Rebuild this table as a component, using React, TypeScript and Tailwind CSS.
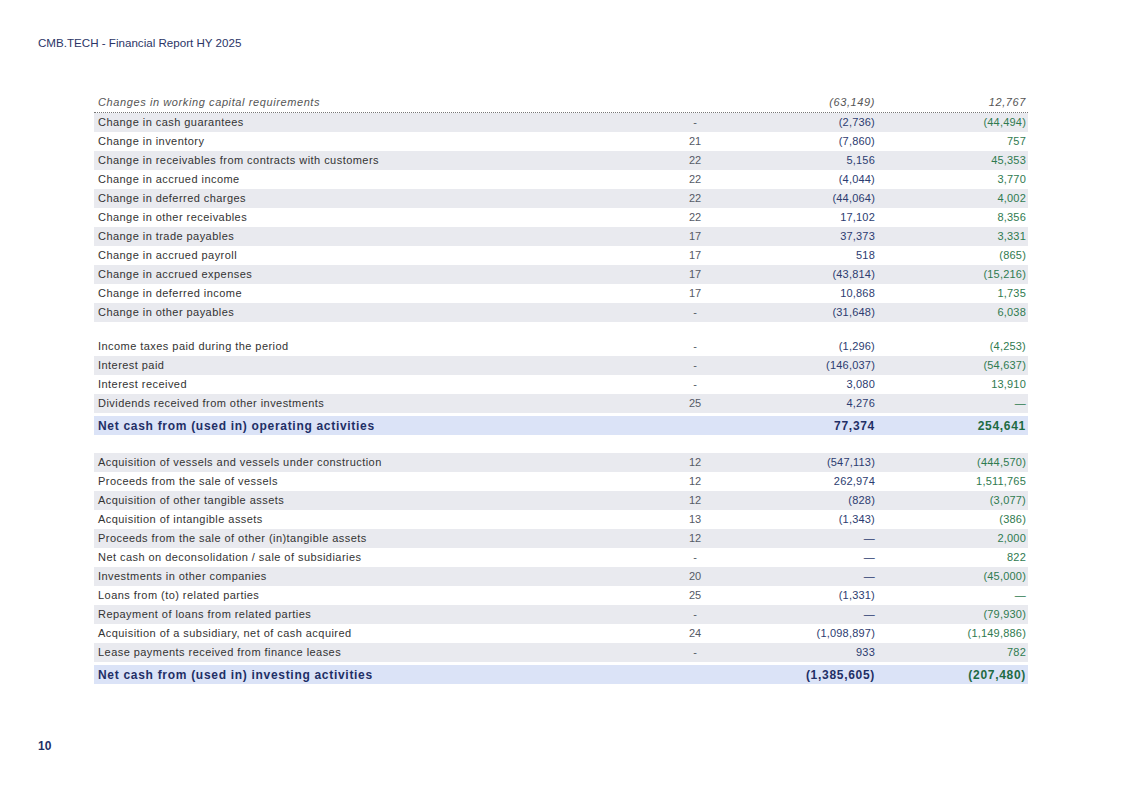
type Row = {
    label: string;
    note?: string;
    cur: string;
    prev: string;
};

const operating: Row[] = [
    { label: 'Change in cash guarantees', note: '-', cur: '(2,736)', prev: '(44,494)' },
    { label: 'Change in inventory', note: '21', cur: '(7,860)', prev: '757' },
    { label: 'Change in receivables from contracts with customers', note: '22', cur: '5,156', prev: '45,353' },
    { label: 'Change in accrued income', note: '22', cur: '(4,044)', prev: '3,770' },
    { label: 'Change in deferred charges', note: '22', cur: '(44,064)', prev: '4,002' },
    { label: 'Change in other receivables', note: '22', cur: '17,102', prev: '8,356' },
    { label: 'Change in trade payables', note: '17', cur: '37,373', prev: '3,331' },
    { label: 'Change in accrued payroll', note: '17', cur: '518', prev: '(865)' },
    { label: 'Change in accrued expenses', note: '17', cur: '(43,814)', prev: '(15,216)' },
    { label: 'Change in deferred income', note: '17', cur: '10,868', prev: '1,735' },
    { label: 'Change in other payables', note: '-', cur: '(31,648)', prev: '6,038' },
];

const otherOperating: Row[] = [
    { label: 'Income taxes paid during the period', note: '-', cur: '(1,296)', prev: '(4,253)' },
    { label: 'Interest paid', note: '-', cur: '(146,037)', prev: '(54,637)' },
    { label: 'Interest received', note: '-', cur: '3,080', prev: '13,910' },
    { label: 'Dividends received from other investments', note: '25', cur: '4,276', prev: '—' },
];

const investing: Row[] = [
    { label: 'Acquisition of vessels and vessels under construction', note: '12', cur: '(547,113)', prev: '(444,570)' },
    { label: 'Proceeds from the sale of vessels', note: '12', cur: '262,974', prev: '1,511,765' },
    { label: 'Acquisition of other tangible assets', note: '12', cur: '(828)', prev: '(3,077)' },
    { label: 'Acquisition of intangible assets', note: '13', cur: '(1,343)', prev: '(386)' },
    { label: 'Proceeds from the sale of other (in)tangible assets', note: '12', cur: '—', prev: '2,000' },
    { label: 'Net cash on deconsolidation / sale of subsidiaries', note: '-', cur: '—', prev: '822' },
    { label: 'Investments in other companies', note: '20', cur: '—', prev: '(45,000)' },
    { label: 'Loans from (to) related parties', note: '25', cur: '(1,331)', prev: '—' },
    { label: 'Repayment of loans from related parties', note: '-', cur: '—', prev: '(79,930)' },
    { label: 'Acquisition of a subsidiary, net of cash acquired', note: '24', cur: '(1,098,897)', prev: '(1,149,886)' },
    { label: 'Lease payments received from finance leases', note: '-', cur: '933', prev: '782' },
];

const gridCols = 'grid w-[934px] grid-cols-[546px_110px_128px_150px]';

function DataRow({ row, striped }: { row: Row; striped: boolean }) {
    return (
        <div className={`${gridCols} h-[19px] items-center ${striped ? 'bg-[#e9eaef]' : 'bg-white'}`}>
            <span className="pl-1 tracking-[0.45px] text-[#333333]">{row.label}</span>
            <span className="text-center text-[#555a66]">{row.note}</span>
            <span className="pr-[3px] text-right tracking-[0.2px] text-[#2c3c70]">{row.cur}</span>
            <span className="pr-[2px] text-right tracking-[0.2px] text-[#2f7a4f]">{row.prev}</span>
        </div>
    );
}

function TotalRow({ label, cur, prev }: { label: string; cur: string; prev: string }) {
    return (
        <div className={`${gridCols} h-[19px] items-center bg-[#dbe3f7] text-[12px] font-bold tracking-[0.7px]`}>
            <span className="pl-1 text-[#1f2f66]">{label}</span>
            <span />
            <span className="pr-[3px] text-right text-[#1f2f66]">{cur}</span>
            <span className="pr-[2px] text-right text-[#1e6b43]">{prev}</span>
        </div>
    );
}

export default function App() {
    return (
        <div className="relative h-[797px] w-[1123px] bg-white font-['Liberation_Sans',Arial,sans-serif] text-[11px]">
            <p className="absolute left-[38px] top-[34px] text-[11.6px] text-[#2b3566]">
                CMB.TECH - Financial Report HY 2025
            </p>

            <div className="flex flex-col pl-[94px] pt-[92px]">
                <div className={`${gridCols} h-[21px] items-center border-b border-dotted border-[#777] italic tracking-[0.6px] text-[#555]`}>
                    <span className="pl-1">Changes in working capital requirements</span>
                    <span />
                    <span className="pr-[3px] text-right">(63,149)</span>
                    <span className="pr-[2px] text-right">12,767</span>
                </div>

                {operating.map((row, i) => (
                    <DataRow key={row.label} row={row} striped={i % 2 === 0} />
                ))}

                <div className="h-[15px]" />
                {otherOperating.map((row, i) => (
                    <DataRow key={row.label} row={row} striped={i % 2 === 1} />
                ))}

                <div className="h-[3px]" />
                <TotalRow label="Net cash from (used in) operating activities" cur="77,374" prev="254,641" />

                <div className="h-[18px]" />
                {investing.map((row, i) => (
                    <DataRow key={row.label} row={row} striped={i % 2 === 0} />
                ))}

                <div className="h-[3px]" />
                <TotalRow label="Net cash from (used in) investing activities" cur="(1,385,605)" prev="(207,480)" />
            </div>

            <p className="absolute left-[38px] top-[737px] text-[12px] font-bold text-[#1f2f66]">10</p>
        </div>
    );
}
